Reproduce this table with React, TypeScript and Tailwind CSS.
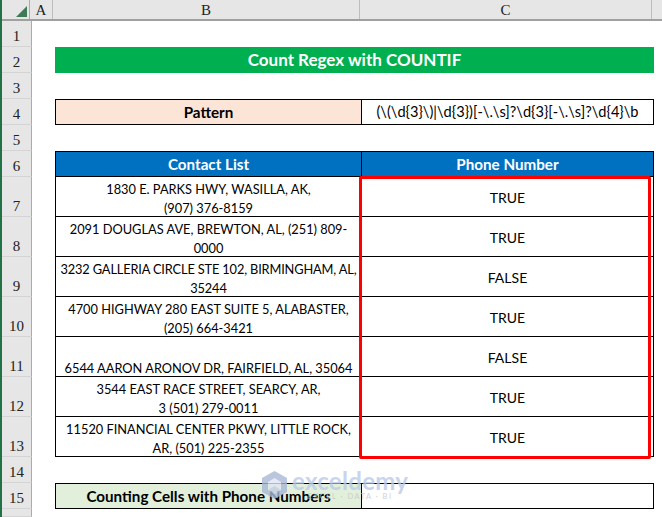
import React from "react";

type Cell = {
  text?: React.ReactNode;
  className?: string;
};

const COLS = ["A", "B", "C"];

const contacts: { addr: string[]; result: string; tight?: boolean }[] = [
  { addr: ["1830 E. PARKS HWY, WASILLA, AK,", "(907) 376-8159"], result: "TRUE" },
  { addr: ["2091 DOUGLAS AVE, BREWTON, AL, (251) 809-", "0000"], result: "TRUE" },
  { addr: ["3232 GALLERIA CIRCLE STE 102, BIRMINGHAM, AL,", "35244"], result: "FALSE", tight: true },
  { addr: ["4700 HIGHWAY 280 EAST SUITE 5, ALABASTER,", "(205) 664-3421"], result: "TRUE" },
  { addr: ["6544 AARON ARONOV DR, FAIRFIELD, AL, 35064"], result: "FALSE" },
  { addr: ["3544 EAST RACE STREET, SEARCY, AR,", "3 (501) 279-0011"], result: "TRUE" },
  { addr: ["11520 FINANCIAL CENTER PKWY, LITTLE ROCK,", "AR, (501) 225-2355"], result: "TRUE" },
];

function RowHead({ n }: { n: number | null }) {
  return (
    <div className="flex w-[30px] shrink-0 items-end justify-center border-r border-b border-r-[#ababab] border-b-[#d4d4d4] bg-[#e6e6e6] pb-[1px] font-['Liberation_Serif',serif] text-[15px] leading-[18px] text-[#222]">
      {n}
    </div>
  );
}

function Row({ n, h, b, c }: { n: number | null; h: string; b?: Cell; c?: Cell }) {
  return (
    <div className={`flex ${h}`}>
      <RowHead n={n} />
      <div className="w-[23px] shrink-0" />
      {b && <div className={`w-[307px] shrink-0 ${b.className ?? ""}`}>{b.text}</div>}
      {c && <div className={`w-[292px] shrink-0 ${c.className ?? ""}`}>{c.text}</div>}
      <div className="flex-1" />
    </div>
  );
}

function Logo() {
  return (
    <svg width="27" height="30" viewBox="0 0 27 30">
      <path d="M13.5 1 L26 8 L26 22 L13.5 29 L1 22 L1 8 Z" fill="#a9b8d6" />
      <path d="M13.5 8 L20 12 L20 20 L13.5 24 L7 20 L7 12 Z" fill="#dfe6f2" />
      <path d="M7 20 L13.5 16 L20 20 L13.5 24 Z" fill="#c2cde2" />
    </svg>
  );
}

export default function App() {
  const font = "font-['Lato',sans-serif] text-black";
  const bold = "font-['Lato',sans-serif] text-[15.2px] font-bold";
  return (
    <div className="relative h-[517px] w-[662px] overflow-hidden bg-white">
      <div className="flex h-full flex-col border-l-2 border-[#217346]">
        {/* column headers */}
        <div className="flex h-[21px] shrink-0 border-b-2 border-[#a0a0a0] bg-[#e6e6e6] font-['Liberation_Serif',serif] text-[15px] text-[#222]">
          <div className="relative w-[28px] shrink-0 border-r border-[#ababab]">
            <svg className="absolute right-[2px] bottom-[2px]" width="11" height="11" viewBox="0 0 11 11">
              <path d="M11 0 L11 11 L0 11 Z" fill="#3d7a55" />
            </svg>
          </div>
          {COLS.map((l, i) => (
            <div
              key={l}
              className={`flex shrink-0 items-center justify-center border-r border-[#bdbdbd] leading-[18px] ${
                i === 0 ? "w-[23px]" : i === 1 ? "w-[307px]" : "w-[292px]"
              }`}
            >
              {l}
            </div>
          ))}
          <div className="flex-1" />
        </div>

        <Row n={1} h="h-[26px]" />
        <Row
          n={2}
          h="h-[26px]"
          b={{
            text: "Count Regex with COUNTIF",
            className:
              "!w-[599px] flex items-center justify-center bg-[#00b050] font-['Lato',sans-serif] text-[17px] font-bold text-white",
          }}
        />
        <Row n={3} h="h-[26px]" />
        <Row
          n={4}
          h="h-[26px]"
          b={{
            text: "Pattern",
            className: `flex items-center justify-center border border-black bg-[#fce4d6] text-black ${bold}`,
          }}
          c={{
            text: "(\\(\\d{3}\\)|\\d{3})[-\\.\\s]?\\d{3}[-\\.\\s]?\\d{4}\\b",
            className: `flex items-center justify-center border border-l-0 border-black whitespace-nowrap ${font} text-[14.6px]`,
          }}
        />
        <Row n={5} h="h-[26px]" />
        <Row
          n={6}
          h="h-[26px]"
          b={{
            text: "Contact List",
            className: `flex items-center justify-center border border-black bg-[#0070c0] text-white ${bold}`,
          }}
          c={{
            text: "Phone Number",
            className: `flex items-center justify-center border border-l-0 border-black bg-[#0070c0] text-white ${bold}`,
          }}
        />
        {contacts.map((r, i) => (
          <Row
            key={i}
            n={7 + i}
            h="h-[40px]"
            b={{
              text: (
                <div className={`translate-y-[2px] ${r.tight ? "tracking-[-0.15px]" : ""}`}>
                  {r.addr.map((line) => (
                    <div key={line}>{line}</div>
                  ))}
                </div>
              ),
              className: `flex flex-col items-center justify-end border-x border-b border-black text-center whitespace-nowrap text-[12.8px] leading-[19px] ${font}`,
            }}
            c={{
              text: <span className="translate-y-[1px]">{r.result}</span>,
              className: `flex items-center justify-center border-r border-b border-black text-[14px] ${font}`,
            }}
          />
        ))}
        <Row n={14} h="h-[26px]" />
        <Row
          n={15}
          h="h-[26px]"
          b={{
            text: "Counting Cells with Phone Numbers",
            className: `flex items-center justify-center border border-black bg-[#e2efda] text-black ${bold}`,
          }}
          c={{ className: "border border-l-0 border-black" }}
        />
        <Row n={null} h="flex-1" />
      </div>

      {/* highlight around results */}
      <div className="pointer-events-none absolute top-[176px] left-[359px] h-[283px] w-[292px] rounded-[2px] border-[3px] border-[#ff0000]" />

      {/* watermark */}
      <div className="pointer-events-none absolute top-[470px] left-[261px] flex items-start gap-[4px] opacity-80">
        <Logo />
        <div className="flex flex-col items-center">
          <span className="font-['Lato',sans-serif] text-[24px] leading-[22px] font-bold tracking-[0.3px] text-[#bccbe8]">
            exceldemy
          </span>
          <span className="font-['Lato',sans-serif] text-[7.5px] leading-[9px] tracking-[1.5px] text-[#c8c8c8]">
            EXCEL · DATA · BI
          </span>
        </div>
      </div>
    </div>
  );
}
